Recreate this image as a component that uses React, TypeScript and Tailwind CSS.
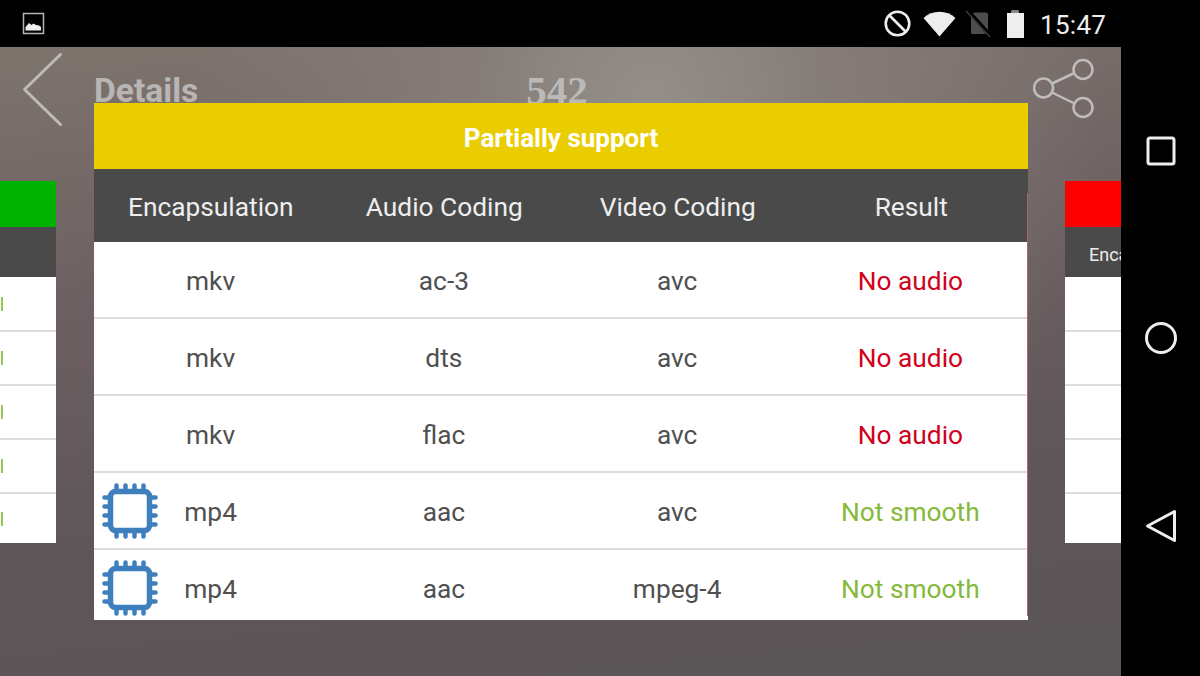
const rows = [
  { file: "mkv", audio: "ac-3", video: "avc", result: "No audio", chip: false },
  { file: "mkv", audio: "dts", video: "avc", result: "No audio", chip: false },
  { file: "mkv", audio: "flac", video: "avc", result: "No audio", chip: false },
  { file: "mp4", audio: "aac", video: "avc", result: "Not smooth", chip: true },
  { file: "mp4", audio: "aac", video: "mpeg-4", result: "Not smooth", chip: true },
];

const pins = [14.5, 23.5, 32.5, 41.5];

function ChipIcon() {
  return (
    <svg width="56" height="56" viewBox="0 0 56 56" className="absolute left-[8px] top-[10px]" fill="none" stroke="#3f7fbd">
      <rect x="8.5" y="8.5" width="39" height="39" rx="5" strokeWidth="5.5" />
      {pins.map((p) => (
        <g key={p} strokeWidth="4.5" strokeLinecap="round">
          <line x1={p} y1="2.500" x2={p} y2="8" />
          <line x1={p} y1="48" x2={p} y2="53.500" />
          <line x1="2.500" y1={p} x2="8" y2={p} />
          <line x1="48" y1={p} x2="53.500" y2={p} />
        </g>
      ))}
    </svg>
  );
}

function SideCard({ color, side }: { color: string; side: "left" | "right" }) {
  return (
    <div className="w-[56px] flex flex-col overflow-hidden">
      <div className={`h-[46px] ${color}`} />
      <div className="h-[50px] bg-[#4a4a4a] flex items-center overflow-hidden pt-[5px]">
        {side === "right" && <span className="ml-[24px] text-[18px] text-[#eeeeee] whitespace-nowrap">Encapsulation</span>}
      </div>
      {[0, 1, 2, 3, 4].map((i) => (
        <div
          key={i}
          className={`bg-white flex items-center ${i === 0 ? "h-[55px] border-b-2 border-[#dcdcdc]" : i < 4 ? "h-[54px] border-b-2 border-[#dcdcdc]" : "h-[49px]"}`}
        >
          {side === "left" && <div className="ml-[1px] w-[2px] h-[14px] bg-[#93c852]" />}
        </div>
      ))}
    </div>
  );
}

export default function App() {
  return (
    <div className="w-[1200px] h-[676px] bg-black flex flex-col overflow-hidden font-['Roboto',sans-serif]">
      {/* Status bar */}
      <div className="h-[47px] shrink-0 flex items-center text-[#eeeeee]">
        <svg width="23" height="23" viewBox="0 0 23 23" className="ml-[22px]">
          <rect x="1.5" y="1.5" width="20" height="20" fill="none" stroke="#b5b5b5" strokeWidth="1.5" />
          <path d="M3.5 18.5v-3.5l3.5-4 2.5 2 2-1.5 2.5 1.5 3 .5 2 1.5v3.5z" fill="#eeeeee" />
        </svg>
        <svg width="27" height="27" viewBox="0 0 27 27" className="ml-[839px]" fill="none" stroke="#eeeeee" strokeWidth="2.6">
          <circle cx="13.5" cy="13.5" r="11.8" />
          <line x1="5.5" y1="5.5" x2="21.5" y2="21.5" />
        </svg>
        <svg width="33" height="26" viewBox="0 0 33 26" className="ml-[12px]">
          <path d="M16.5 25.5 0.5 7C5 3 10.500 0.800 16.500 0.800S28 3 32.500 7z" fill="#eeeeee" />
        </svg>
        <svg width="26" height="28" viewBox="0 0 26 28" className="ml-[9px]">
          <path d="M6 5.500V22.500Q6 24 7.500 24H21L6 6.500ZM9.500 2.500H21Q23 2.500 23 4.500V20L8 3.500Z" fill="#4d4d4d" />
          <line x1="1" y1="1" x2="25" y2="27" stroke="#3a3a3a" strokeWidth="1.500" />
        </svg>
        <svg width="19" height="28" viewBox="0 0 19 28" className="ml-[15px]">
          <path d="M5.500 0.500h7V3H18v25H1V3h4.500z" fill="#eeeeee" />
          <path d="M5.500 0.500h7V3H5.500z" fill="#8a8a8a" />
        </svg>
        <span className="ml-[15px] mt-[2px] text-[26px] leading-none tracking-[0.3px]">15:47</span>
      </div>

      <div className="flex-1 flex min-h-0">
        {/* App content */}
        <div className="relative w-[1121px] bg-[radial-gradient(circle_at_650px_50px,#948f8a_0,#867d78_170px,transparent_460px),linear-gradient(175deg,#7e746d_0%,#6d6062_35%,#5f5659_70%,#5a5558_100%)]">
          <div className="h-[85px] flex items-center">
            <svg width="42" height="76" viewBox="0 0 42 76" className="ml-[22px] mr-[30px]" fill="none" stroke="#bdbbb9" strokeWidth="3" strokeLinecap="round" strokeLinejoin="round">
              <path d="M38.500 2.500 2.500 37.500 38.500 72.500" />
            </svg>
            <span className="text-[33.6px] font-bold leading-none mt-[2px] text-[#b8b6b5]">Details</span>
            <span className="ml-[328px] mt-[2px] text-[41px] font-bold leading-none text-[#bcbab8] font-['Liberation_Serif',serif]">542</span>
            <svg width="62" height="62" viewBox="0 0 62 62" className="ml-auto mr-[26px] mt-[-2px]" fill="none" stroke="#bfbdbb" strokeWidth="2.500">
              <circle cx="10.500" cy="30" r="9.500" />
              <circle cx="50" cy="11.500" r="9.500" />
              <circle cx="50" cy="49.500" r="9.500" />
              <line x1="19" y1="25.500" x2="41.500" y2="15" />
              <line x1="19" y1="34.500" x2="41.500" y2="45.500" />
            </svg>
          </div>

          <div className="flex justify-between pt-[49px]">
            <SideCard color="bg-[#00b200]" side="left" />
            <SideCard color="bg-[#ff0000]" side="right" />
          </div>

          {/* Dialog */}
          <div className="absolute left-[94px] top-[56px] w-[934px]">
            <div className="h-[66px] bg-[#eacd00] flex items-center justify-center text-white font-bold text-[26px] pt-[5px]">
              Partially support
            </div>
            <div className="h-[73px] bg-[#4a4a4a] grid grid-cols-4 items-center text-center text-[26.3px] text-[#eeeeee] pt-[5px]">
              <span>Encapsulation</span>
              <span>Audio Coding</span>
              <span>Video Coding</span>
              <span>Result</span>
            </div>
            {rows.map((row, i) => (
              <div
                key={i}
                className={`relative bg-white grid grid-cols-4 items-center text-center text-[26.3px] text-[#505050] pr-[1px] ${i < 4 ? "h-[77px] border-b-2 border-[#dcdcdc] pt-[4px]" : "h-[70px] pt-[10px]"}`}
              >
                {row.chip && <ChipIcon />}
                <span>{row.file}</span>
                <span>{row.audio}</span>
                <span>{row.video}</span>
                <span className={row.chip ? "text-[#84b93a]" : "text-[#d0021b]"}>{row.result}</span>
              </div>
            ))}
            <div className="absolute left-[933px] top-[90px] bottom-[4px] w-[1px] bg-[#b4636b]" />
          </div>
        </div>

        {/* Nav bar */}
        <div className="flex-1 flex flex-col items-center pt-[88px] gap-[155px]">
          <svg width="32" height="32" viewBox="0 0 32 32" fill="none" stroke="#eeeeee" strokeWidth="3">
            <rect x="3" y="3" width="26" height="26" rx="2" />
          </svg>
          <svg width="32" height="32" viewBox="0 0 32 32" fill="none" stroke="#eeeeee" strokeWidth="3">
            <circle cx="16" cy="16" r="14.500" />
          </svg>
          <svg width="32" height="34" viewBox="0 0 32 34" fill="none" stroke="#eeeeee" strokeWidth="3" strokeLinejoin="round">
            <path d="M29.500 2.500V31.500L2.500 17z" />
          </svg>
        </div>
      </div>
    </div>
  );
}
